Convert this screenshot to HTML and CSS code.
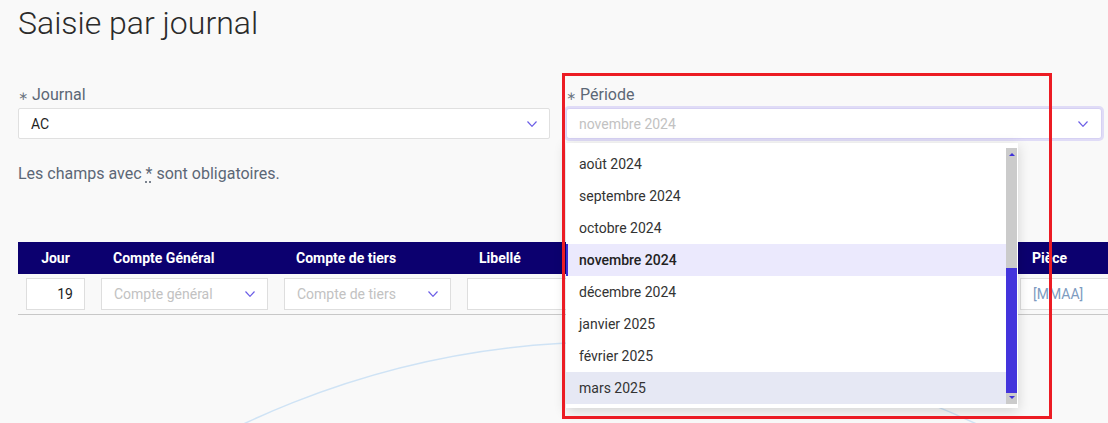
FILE: index.html
```html
<!DOCTYPE html>
<html lang="fr">
<head>
    <meta charset="UTF-8">
    <meta name="viewport" content="width=device-width, initial-scale=1.0">
    <title>Saisie par journal</title>
    <link rel="stylesheet" href="styles.css">
</head>
<body>
    <!-- décor de fond -->
    <svg class="backdrop" width="1108" height="423" viewBox="0 0 1108 423">
        <circle cx="610" cy="1202" r="860" fill="none" stroke="#cfe3f5" stroke-width="1.5"/>
    </svg>

    <div class="page">
        <h1 class="title">Saisie par journal</h1>

        <div class="fields">
            <div class="field">
                <label class="label"><span class="req">∗</span> Journal</label>
                <div class="select">
                    <span class="value">AC</span>
                    <svg class="chevron" width="10" height="6" viewBox="0 0 10 6"><polyline points="0.5,0.5 5,5.3 9.5,0.5"/></svg>
                </div>
            </div>

            <div class="field field-open">
                <label class="label"><span class="req">∗</span> Période</label>
                <div class="select select-focus">
                    <span class="placeholder">novembre 2024</span>
                    <svg class="chevron" width="10" height="6" viewBox="0 0 10 6"><polyline points="0.5,0.5 5,5.3 9.5,0.5"/></svg>
                </div>

                <div class="menu">
                    <ul class="menu-list">
                        <li>août 2024</li>
                        <li>septembre 2024</li>
                        <li>octobre 2024</li>
                        <li class="selected">novembre 2024</li>
                        <li>décembre 2024</li>
                        <li>janvier 2025</li>
                        <li>février 2025</li>
                        <li class="hover">mars 2025</li>
                    </ul>
                    <div class="scrollbar">
                        <span class="arrow arrow-up"></span>
                        <span class="track"></span>
                        <span class="thumb"></span>
                        <span class="arrow arrow-down"></span>
                    </div>
                </div>
            </div>
        </div>

        <p class="note">Les champs avec <abbr title="obligatoire">*</abbr> sont obligatoires.</p>

        <div class="entries">
            <div class="entries-head">
                <div class="th th-day">Jour</div>
                <div class="th">Compte Général</div>
                <div class="th">Compte de tiers</div>
                <div class="th">Libellé</div>
                <div class="th">Pièce</div>
            </div>
            <div class="entries-row">
                <div class="td"><div class="input input-day">19</div></div>
                <div class="td">
                    <div class="input input-select">
                        <span class="placeholder">Compte général</span>
                        <svg class="chevron" width="10" height="6" viewBox="0 0 10 6"><polyline points="0.5,0.5 5,5.3 9.5,0.5"/></svg>
                    </div>
                </div>
                <div class="td">
                    <div class="input input-select">
                        <span class="placeholder">Compte de tiers</span>
                        <svg class="chevron" width="10" height="6" viewBox="0 0 10 6"><polyline points="0.5,0.5 5,5.3 9.5,0.5"/></svg>
                    </div>
                </div>
                <div class="td"><div class="input"></div></div>
                <div class="td"><div class="input input-piece"><span class="mask">[MMAA]</span></div></div>
            </div>
        </div>
    </div>

    <!-- cadre d'annotation -->
    <div class="highlight"></div>
</body>
</html>
```

FILE: styles.css
```css
/* global */
body {
    font-family: Roboto, "Liberation Sans", sans-serif;
    margin: 0;
    padding: 0;
    background-color: #f9f9f9;
    color: #222222;
    width: 1108px;
    height: 423px;
    overflow: hidden;
    position: relative;
}

.backdrop {
    position: absolute;
    top: 0;
    left: 0;
    z-index: 0;
}

.page {
    position: relative;
    z-index: 1;
    padding-left: 18px;
}

.title {
    margin: 4px 0 0;
    font-size: 32px;
    line-height: 38px;
    font-weight: 300;
    color: #2b2b2b;
}

/* champs */
.fields {
    display: grid;
    grid-template-columns: 532px 536px;
    gap: 16px;
    margin-top: 41px;
}

.field {
    display: flex;
    flex-direction: column;
    gap: 1px;
}

.field-open {
    position: relative;
}

.label {
    display: block;
    height: 24px;
    font-size: 16px;
    line-height: 24px;
    color: #5c6776;
}

.req {
    font-family: "DejaVu Sans", sans-serif;
    font-size: 12px;
    line-height: 0;
    color: #6b7480;
}

.select {
    height: 31px;
    box-sizing: border-box;
    border: 1px solid #e0e0e0;
    border-radius: 2px;
    background-color: #ffffff;
    display: flex;
    align-items: center;
    justify-content: space-between;
    padding: 0 12px 0 12px;
    font-size: 14px;
}

.select-focus {
    border-color: #d6d1f3;
    box-shadow: 0 0 0 2px #e0dcf7;
    border-radius: 3px;
    padding-right: 13px;
}

.value {
    color: #1f1f1f;
}

.placeholder {
    color: #c2c2c2;
}

.chevron polyline {
    fill: none;
    stroke: #6a5ce6;
    stroke-width: 1.2;
}

/* liste déroulante */
.menu {
    position: absolute;
    top: calc(100% + 4px);
    left: 0;
    width: 452px;
    box-sizing: border-box;
    padding: 5px 1px 4px 0;
    background-color: #ffffff;
    box-shadow: 0 3px 12px rgba(0, 0, 0, 0.16);
    display: flex;
    z-index: 5;
}

.menu-list {
    list-style: none;
    margin: 0;
    padding: 0;
    flex: 1;
}

.menu-list li {
    height: 32px;
    line-height: 32px;
    padding-left: 13px;
    font-size: 14px;
    color: #333333;
}

.menu-list .selected {
    background-color: #ebe9fd;
    border-left: 2px solid #3b2fd6;
    padding-left: 11px;
    font-weight: 500;
    color: #222222;
}

.menu-list .hover {
    background-color: #e6e8f4;
}

.scrollbar {
    width: 11px;
    display: flex;
    flex-direction: column;
    align-items: center;
    background-color: #cbcbcb;
}

.arrow {
    width: 0;
    height: 0;
    border-left: 3px solid transparent;
    border-right: 3px solid transparent;
}

.arrow-up {
    border-bottom: 3px solid #3f31d9;
    margin: 5px 0 4px;
}

.arrow-down {
    border-top: 3px solid #3f31d9;
    margin: 3px 0 5px;
}

.track {
    flex: 1;
}

.thumb {
    width: 100%;
    height: 125px;
    background-color: #4334dc;
}

.note {
    margin: 25px 0 0;
    font-size: 16px;
    line-height: 20px;
    color: #5c6776;
}

.note abbr {
    text-decoration: underline dotted;
    text-underline-offset: 3px;
}

/* tableau de saisie */
.entries {
    margin-top: 58px;
    width: 1090px;
    overflow: hidden;
}

.entries-head, .entries-row {
    display: grid;
    grid-template-columns: 75px 183px 183px 553px 96px;
}

.entries-head {
    background-color: #0c006f;
    height: 32px;
}

.th {
    color: #ffffff;
    font-weight: 700;
    font-size: 14px;
    line-height: 32px;
    padding-left: 20px;
    white-space: nowrap;
}

.th-day {
    padding-left: 0;
    text-align: center;
}

.entries-row {
    border-bottom: 1px solid #c8c8c8;
}

.td {
    padding: 4px 8px;
    min-width: 0;
}

.input {
    height: 32px;
    box-sizing: border-box;
    border: 1px solid #dedede;
    background-color: #ffffff;
    font-size: 14px;
    display: flex;
    align-items: center;
    padding: 0 12px;
}

.input-day {
    justify-content: flex-end;
    padding-right: 11px;
    color: #222222;
}

.input-select {
    justify-content: space-between;
}

.input-piece {
    width: 130px;
}

.mask {
    color: #7d9bc0;
}

/* annotation */
.highlight {
    position: absolute;
    left: 562px;
    top: 73px;
    width: 490px;
    height: 346px;
    box-sizing: border-box;
    border: 3px solid #ec1c24;
    z-index: 10;
}
```
